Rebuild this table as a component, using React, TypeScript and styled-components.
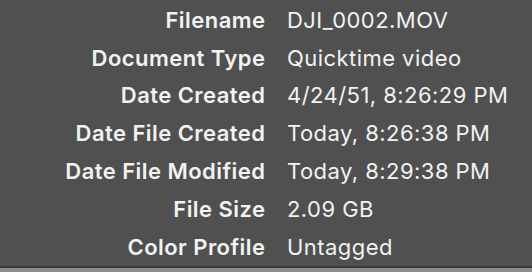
import React from "react";
import styled, { createGlobalStyle } from "styled-components";

const GlobalStyle = createGlobalStyle`
  html, body {
    margin: 0;
    padding: 0;
    background: #505050;
  }
  body {
    font-family: Inter, "Liberation Sans", Arial, sans-serif;
    -webkit-font-smoothing: antialiased;
  }
`;

const Panel = styled.div`
  width: 532px;
  height: 272px;
  display: flex;
  flex-direction: column;
  background: #505050;
  overflow: hidden;
`;

const InfoGrid = styled.dl`
  margin: 0;
  padding-top: 1px;
  display: grid;
  grid-template-columns: 265px 1fr;
  grid-auto-rows: 37.8px;
  column-gap: 22px;
  align-items: center;
  flex: 1;
`;

const Label = styled.dt`
  margin: 0;
  text-align: right;
  font-weight: 600;
  font-size: 22px;
  letter-spacing: 0.45px;
  margin-right: -0.45px;
  color: #f2f2f2;
  white-space: nowrap;
`;

const Value = styled.dd`
  margin: 0;
  font-size: 22px;
  letter-spacing: 0.45px;
  color: #f2f2f2;
  white-space: nowrap;
`;

const Footer = styled.div`
  height: 6px;
  border-top: 2px solid #3a3a3a;
  background: #8c8c8c;
`;

const rows: [string, string][] = [
  ["Filename", "DJI_0002.MOV"],
  ["Document Type", "Quicktime video"],
  ["Date Created", "4/24/51, 8:26:29 PM"],
  ["Date File Created", "Today, 8:26:38 PM"],
  ["Date File Modified", "Today, 8:29:38 PM"],
  ["File Size", "2.09 GB"],
  ["Color Profile", "Untagged"],
];

const App = () => {
  return (
    <>
      <GlobalStyle />
      <Panel>
        <InfoGrid>
          {rows.map(([label, value]) => (
            <React.Fragment key={label}>
              <Label>{label}</Label>
              <Value>{value}</Value>
            </React.Fragment>
          ))}
        </InfoGrid>
        <Footer />
      </Panel>
    </>
  );
};

export default App;
